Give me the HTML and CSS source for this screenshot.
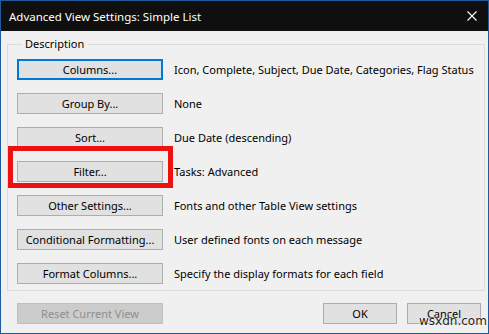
FILE: index.html
```html
<!DOCTYPE html>
<html>
<head>
<meta charset="utf-8">
<link rel="stylesheet" href="styles.css">
</head>
<body>
<div class="window">
  <div class="titlebar">
    <span class="title">Advanced View Settings: Simple List</span>
    <svg class="close" width="10" height="10" viewBox="0 0 10 10"><path d="M0.5 0.5 L9.5 9.5 M9.5 0.5 L0.5 9.5" stroke="#fff" stroke-width="1.1" fill="none"/></svg>
  </div>
  <div class="content">
    <fieldset class="group">
      <legend>Description</legend>
      <div class="row"><button class="btn focused">Columns...</button><span class="desc">Icon, Complete, Subject, Due Date, Categories, Flag Status</span></div>
      <div class="row"><button class="btn">Group By...</button><span class="desc">None</span></div>
      <div class="row"><button class="btn">Sort...</button><span class="desc">Due Date (descending)</span></div>
      <div class="row highlight"><button class="btn">Filter...</button><span class="desc">Tasks: Advanced</span></div>
      <div class="row"><button class="btn">Other Settings...</button><span class="desc">Fonts and other Table View settings</span></div>
      <div class="row"><button class="btn">Conditional Formatting...</button><span class="desc">User defined fonts on each message</span></div>
      <div class="row"><button class="btn">Format Columns...</button><span class="desc">Specify the display formats for each field</span></div>
    </fieldset>
    <div class="footer">
      <button class="btn disabled">Reset Current View</button>
      <div class="actions">
        <button class="btn small">OK</button>
        <button class="btn small">Cancel</button>
      </div>
    </div>
    <span class="watermark">wsxdn.com</span>
  </div>
</div>
</body>
</html>
```
FILE: styles.css
```css
*, *::before, *::after { box-sizing: border-box; }
html, body { margin: 0; padding: 0; }
body { font-family: "Noto Sans", "Open Sans", sans-serif; font-size: 11px; background: #f0f0f0; }
.window {
  width: 489px; height: 334px;
  border: 1px solid #1e5b9c;
  background: #f0f0f0;
  display: flex; flex-direction: column;
}
.titlebar {
  height: 30px; background: #0f0f0f; color: #fff;
  display: flex; align-items: center; justify-content: space-between;
  padding: 0 11px 0 8px;
  flex: none;
}
.title { font-size: 11.5px; }
.close { display: block; margin-top: -1px; }
.content { position: relative; flex: 1; padding: 5px 6px 0 6px; }
.group {
  margin: 0; border: 1px solid #dcdcdc;
  padding: 7px 10px 6px 9px;
  display: flex; flex-direction: column; gap: 13px;
}
.group legend { padding: 0 3px; margin-left: 5px; line-height: 16px; color: #000; }
.row { display: flex; align-items: center; gap: 11px; position: relative; }
.btn {
  font-family: inherit; font-size: 11px; color: #000;
  background: #e1e1e1; border: 1px solid #adadad;
  height: 21px; padding: 0; margin: 0;
  width: 146px; flex: none; line-height: 18px;
}
.btn.focused { border: 2px solid #0078d7; }
.btn.disabled { background: #cccccc; border-color: #bfbfbf; color: #8e8e8e; }
.btn.small { width: 74px; }
.desc { color: #000; white-space: nowrap; }
.highlight::before {
  content: ""; position: absolute;
  left: -9px; top: -15px; width: 165px; height: 42px;
  border: 5px solid #ee1111;
}
.footer { display: flex; justify-content: space-between; align-items: center; padding: 12px 1px 0 10px; }
.actions { display: flex; gap: 10px; }
.watermark {
  position: absolute; left: 418px; top: 283px;
  font-family: "DejaVu Sans", sans-serif; font-size: 12px; color: #222;
  text-shadow: 0 0 2px #fff, 0 0 2px #fff;
}
```
